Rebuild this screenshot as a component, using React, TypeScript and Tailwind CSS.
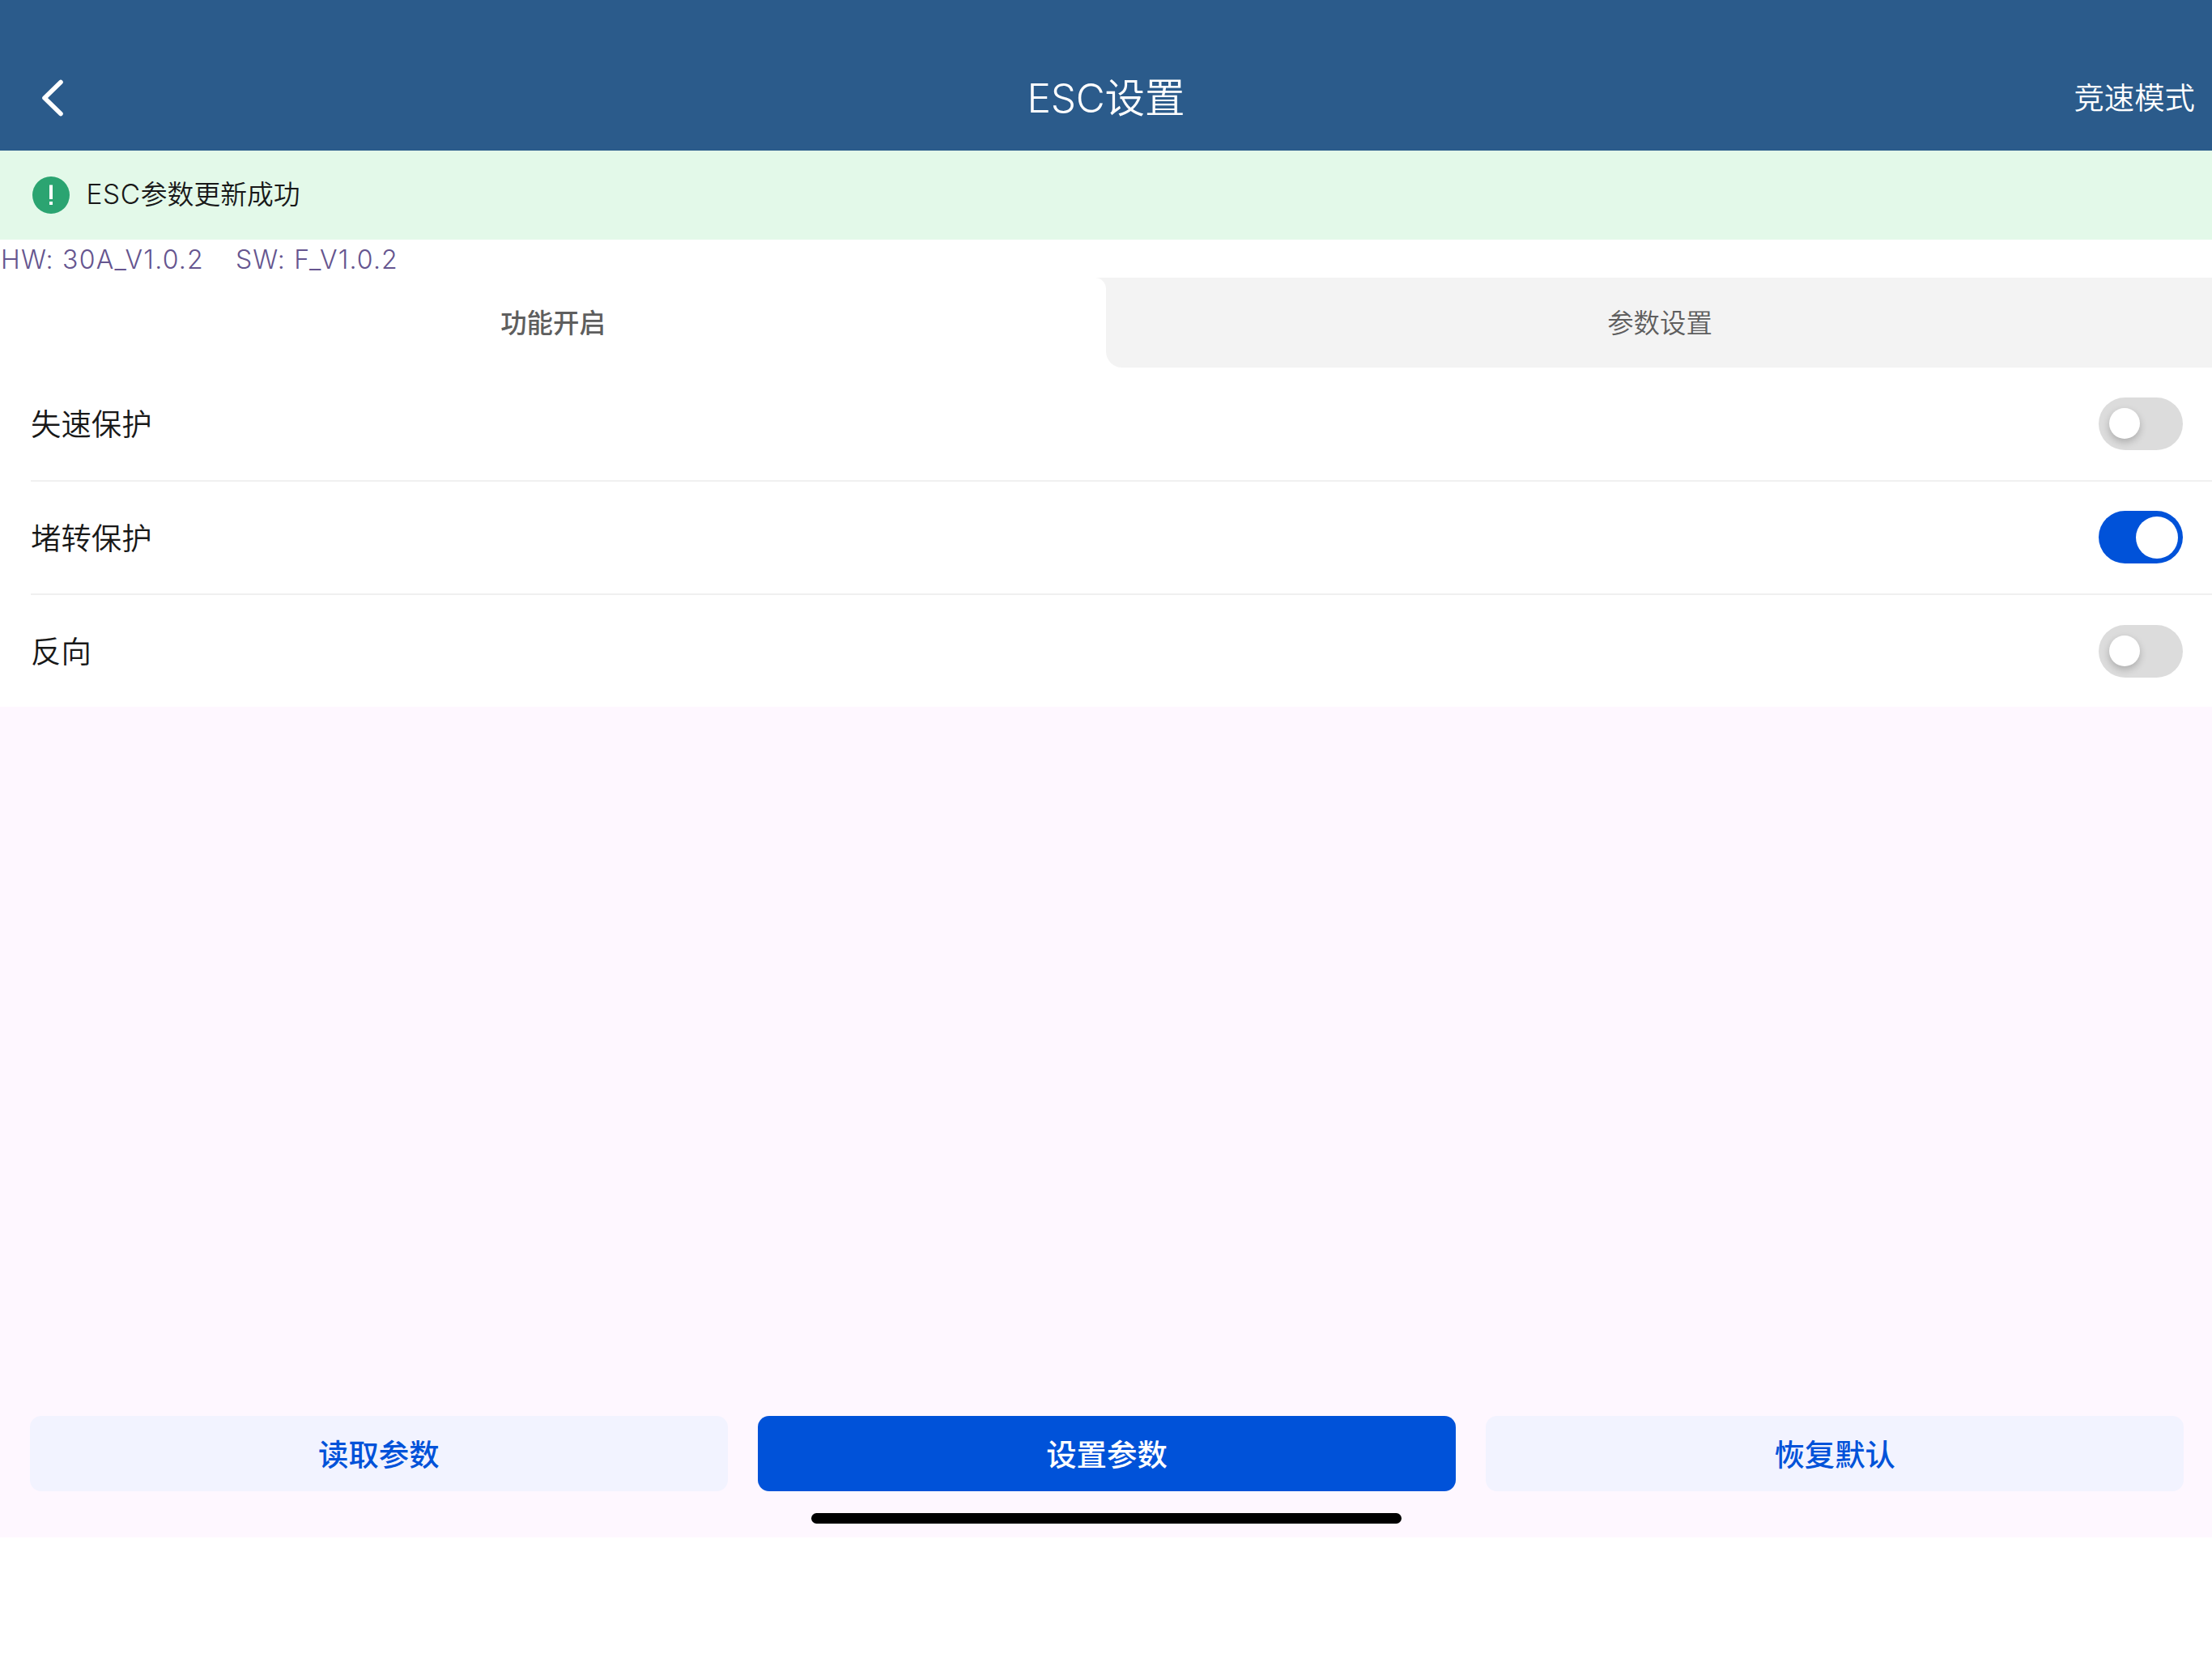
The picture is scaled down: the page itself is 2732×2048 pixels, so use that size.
import { useState } from "react";
import clsx from "clsx";

const Switch = ({
  checked,
  onChange,
}: {
  checked: boolean;
  onChange: () => void;
}) => (
  <button
    type="button"
    role="switch"
    aria-checked={checked}
    onClick={onChange}
    className={clsx(
      "flex h-[65px] w-[104px] items-center rounded-full",
      checked
        ? "justify-end bg-[#0052d9] pr-1.5"
        : "justify-start bg-[#dcdcdc] pl-[13px]",
    )}
  >
    <span
      className={clsx(
        "rounded-full bg-white",
        checked
          ? "size-[52px]"
          : "size-[38px] shadow-[0_4px_10px_rgba(0,0,0,0.22)]",
      )}
    />
  </button>
);

const Header = () => (
  <header className="grid h-[186px] grid-cols-3 items-center bg-[#2b5b8b] pt-[56px] text-white">
    <button type="button" className="w-fit pl-[50px]" aria-label="back">
      <svg width="30" height="46" viewBox="0 0 30 46" fill="none">
        <path
          d="M25 3.500 5 23l20 19.500"
          stroke="currentColor"
          strokeWidth="5.6"
          strokeLinecap="round"
          strokeLinejoin="round"
        />
      </svg>
    </button>
    <h1 className="pt-[2px] text-center text-[49.5px] leading-none">
      <span className="tracking-[-0.2px]">ESC</span>设置
    </h1>
    <p className="pt-[2px] pr-[21px] text-right text-[37.4px] leading-none">
      竞速模式
    </p>
  </header>
);

const Notice = () => (
  <div className="flex h-[110px] items-center bg-[#e3f9e9] pl-[40px] text-[32.8px] leading-none text-[#181818]">
    <svg width="46" height="46" viewBox="0 0 46 46">
      <circle cx="23" cy="23" r="23" fill="#2ba471" />
      <path d="M21 10.500h4v17.500h-4zM21 31h4v4h-4z" fill="#fff" />
    </svg>
    <p className="ml-[20.5px] pb-px">
      <span className="text-[33.5px] tracking-[0.6px]">ESC</span>参数更新成功
    </p>
  </div>
);

const tabs = ["功能开启", "参数设置"];

const Tabs = () => {
  const [active, setActive] = useState(0);

  return (
    <div className="flex h-[111px] bg-[#f3f3f3]">
      {tabs.map((tab, i) => (
        <button
          key={tab}
          type="button"
          onClick={() => setActive(i)}
          className={clsx(
            "flex-1 bg-white text-[32.4px] leading-none text-[#5e5e5e]",
            i === active && "rounded-tr-[14px] pt-[3px] font-medium",
          )}
        >
          {i === active ? (
            tab
          ) : (
            <span className="flex h-full items-center justify-center rounded-bl-[20px] bg-[#f3f3f3] pt-[3px] pl-[2px]">
              {tab}
            </span>
          )}
        </button>
      ))}
    </div>
  );
};

const initialOptions = [
  { label: "失速保护", on: false },
  { label: "堵转保护", on: true },
  { label: "反向", on: false },
];

const Options = () => {
  const [options, setOptions] = useState(initialOptions);

  const toggle = (label: string) =>
    setOptions(options.map((o) => (o.label === label ? { ...o, on: !o.on } : o)));

  return (
    <ul className="h-[419px] bg-white pl-[38px]">
      {options.map(({ label, on }) => (
        <li
          key={label}
          className="flex h-[140.5px] items-center justify-between border-[#f0f0f0] border-b-2 pr-[36px] text-[37.4px] text-[#181818] leading-none last:h-[138px] last:border-0"
        >
          <span className="pt-[3px]">{label}</span>
          <Switch checked={on} onChange={() => toggle(label)} />
        </li>
      ))}
    </ul>
  );
};

const actions = [
  { label: "读取参数", primary: false },
  { label: "设置参数", primary: true },
  { label: "恢复默认", primary: false },
];

export default function App() {
  return (
    <div className="h-[2048px] w-[2732px] bg-white font-['Inter','Noto_Sans_CJK_SC',sans-serif] font-[350]">
      <div className="flex h-[1899px] flex-col bg-[#fef7ff]">
        <Header />
        <Notice />
        <div className="flex h-[47px] items-center gap-[39px] bg-white pt-[2px] pl-px text-[#65558f] text-[32px] leading-none">
          <span className="tracking-[1.25px]">HW: 30A_V1.0.2</span>
          <span className="tracking-[1.15px]">SW: F_V1.0.2</span>
        </div>
        <Tabs />
        <Options />
        <div className="mt-auto flex gap-[37.5px] pr-[35px] pb-[27px] pl-[37px]">
          {actions.map(({ label, primary }) => (
            <button
              key={label}
              type="button"
              className={clsx(
                "h-[93px] flex-1 rounded-[14px] pt-[4px] text-[37.4px] leading-none font-medium",
                primary ? "bg-[#0052d9] text-white" : "bg-[#f2f3ff] text-[#0052d9]",
              )}
            >
              {label}
            </button>
          ))}
        </div>
        <div className="mx-auto mb-[17px] h-[13px] w-[729px] shrink-0 rounded-full bg-black" />
      </div>
    </div>
  );
}
